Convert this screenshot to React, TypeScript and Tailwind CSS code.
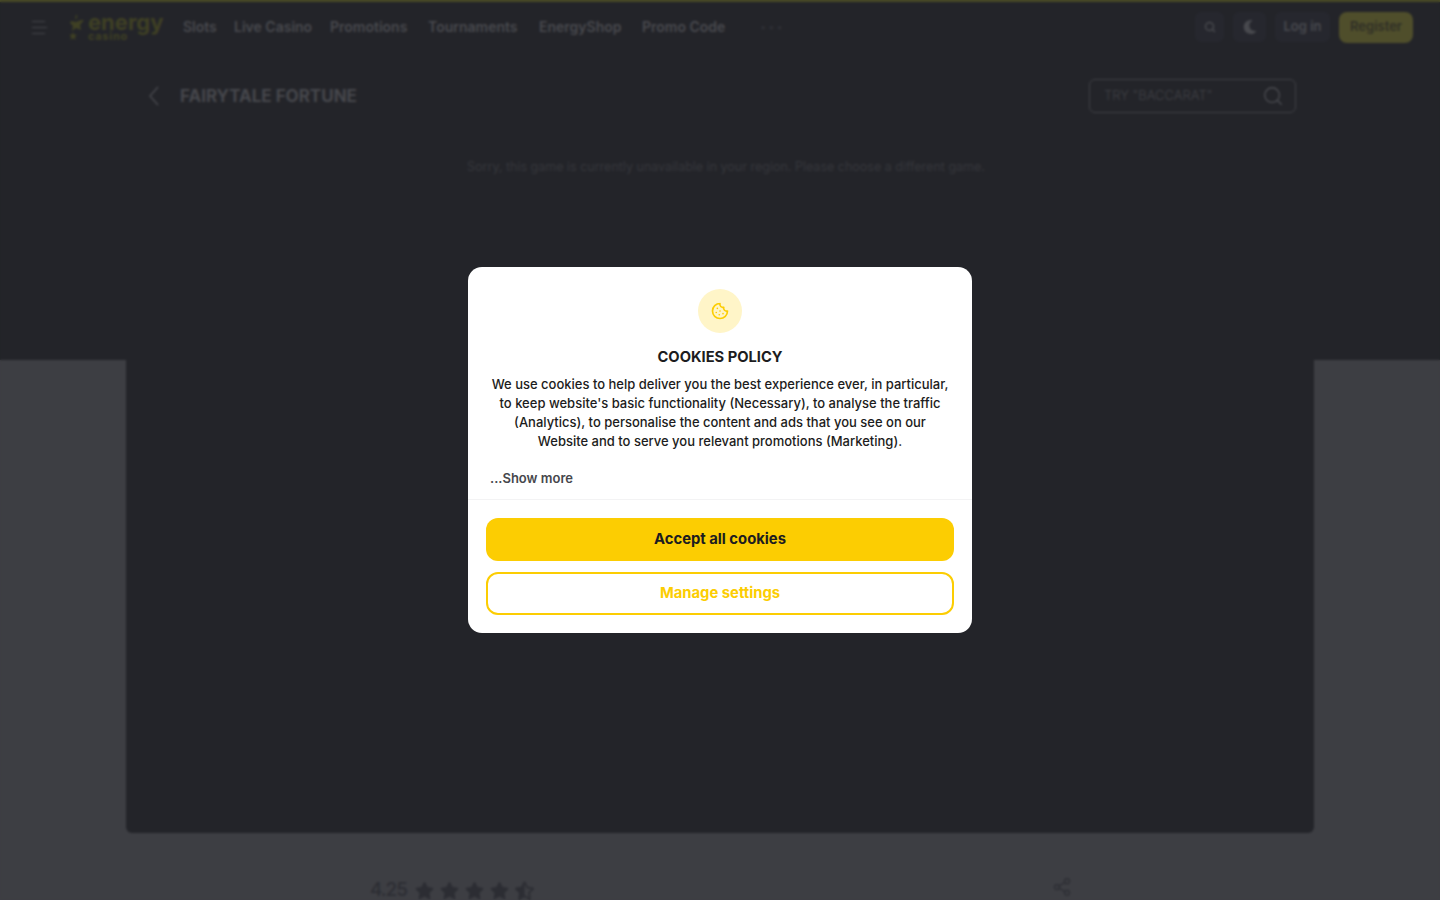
import { Cookie, Search, Share2 } from "lucide-react";
import { FaMoon, FaStar, FaStarHalfAlt } from "react-icons/fa";

const nav = [
  { label: "Slots", w: "w-[33px]" },
  { label: "Live Casino", w: "w-[78px]" },
  { label: "Promotions", w: "w-[80px]" },
  { label: "Tournaments", w: "w-[93px]" },
  { label: "EnergyShop", w: "w-[85px]" },
  { label: "Promo Code", w: "w-[86px]" },
];

function Logo() {
  return (
    <div className="flex items-center gap-[3px]">
      <svg width="17" height="26" viewBox="0 0 17 26" fill="#3f4024">
        <path d="M8 0l1.500 3L7 6z" />
        <path d="M3 7l5 1 5-2 3 0-4 5 1 5-5-2-4 3 1-5-3-3z" />
        <path d="M5 18l1 2.500 3 .3-2 2 .6 3-2.600-1.500-2.500 1.500.6-3-2-2 3-.3z" />
      </svg>
      <div className="flex w-[76px] flex-col text-[#3f4024]">
        <span className="text-[22px] leading-[18px] font-bold">energy</span>
        <span className="text-[11px] leading-[10px] font-bold tracking-[0.7px]">casino</span>
      </div>
    </div>
  );
}

function Header() {
  return (
    <header className="flex h-[54px] items-center border-t-2 border-[#484a26] pr-[27px] pb-[2px] pl-[32px]">
      <div className="flex w-[16px] flex-col gap-[5px]">
        <div className="h-px w-[13px] bg-[#44454a]" />
        <div className="h-px w-[15px] bg-[#44454a]" />
        <div className="h-px w-[13px] bg-[#44454a]" />
      </div>
      <div className="ml-[20px]">
        <Logo />
      </div>
      <nav className="ml-[19px] -mt-[2px] flex gap-[18px] text-[14px] font-semibold whitespace-nowrap text-[#48494e]">
        {nav.map((item) => (
          <a key={item.label} className={item.w}>{item.label}</a>
        ))}
      </nav>
      <span className="ml-[32px] text-[11px] tracking-[2px] text-[#2e2f35]">•••</span>
      <div className="ml-auto flex items-center gap-[9px]">
        <button className="flex h-[30px] w-[29px] items-center justify-center rounded-md bg-[#26272e] text-[#48494e]">
          <Search size={12} strokeWidth={3} />
        </button>
        <button className="flex h-[30px] w-[33px] items-center justify-center rounded-md bg-[#26272e] text-[#48494e]">
          <FaMoon size={14} />
        </button>
        <button className="flex h-[30px] w-[55px] items-center justify-center rounded-md bg-[#26272e] text-[13px] font-semibold text-[#48494e]">
          Log in
        </button>
        <button className="flex h-[31px] w-[74px] items-center justify-center rounded-lg bg-[#4f4e2b] text-[13px] font-semibold text-[#2f2f26]">
          Register
        </button>
      </div>
    </header>
  );
}

function Modal() {
  return (
    <div className="fixed inset-0 flex items-center justify-center backdrop-blur-[1px]">
      <div className="w-[504px] rounded-[14px] bg-white">
        <div className="flex flex-col items-center px-[18px] pt-[22px]">
          <div className="flex size-[44px] items-center justify-center rounded-full bg-[#fff5c8]">
            <Cookie size={18} strokeWidth={2.2} className="text-[#fccd02]" />
          </div>
          <h2 className="mt-[15px] text-[14.700px] leading-[19px] font-bold text-[#1c1c20]">COOKIES POLICY</h2>
          <p className="mt-[8px] text-center text-[13px] leading-[19px] font-medium whitespace-nowrap text-[#1c1c20]">
            We use cookies to help deliver you the best experience ever, in particular,
            <br />
            to keep website's basic functionality (Necessary), to analyse the traffic
            <br />
            (Analytics), to personalise the content and ads that you see on our
            <br />
            Website and to serve you relevant promotions (Marketing).
          </p>
          <div className="mt-[18px] w-full pl-[4px] text-[13px] leading-[19px] font-semibold text-[#46474c]">...Show more</div>
        </div>
        <div className="mt-[11px] border-t border-[#f3f3f4] p-[18px]">
          <button className="h-[43px] w-full rounded-xl bg-[#fccd02] text-[14.800px] font-bold text-[#1c1c20]">Accept all cookies</button>
          <button className="mt-[11px] h-[43px] w-full rounded-xl border-2 border-[#fccd02] bg-white text-[14.800px] font-bold text-[#fccd02]">Manage settings</button>
        </div>
      </div>
    </div>
  );
}

export default function App() {
  return (
    <div className="h-[900px] overflow-hidden bg-[#3d3e43] font-['Inter',sans-serif]">
      <section className="h-[360px] bg-[#232429]">
        <Header />
        <div className="mx-[144px] mt-[25px] flex items-center justify-between">
          <div className="flex items-center gap-[21px]">
            <svg width="11" height="20" viewBox="0 0 11 20" fill="none" stroke="#46474c" strokeWidth="1.5" className="ml-[4px]">
              <path d="M10 1L2 10l8 9" />
            </svg>
            <h1 className="pt-[2px] text-[17px] font-bold text-[#46474c]">FAIRYTALE FORTUNE</h1>
          </div>
          <div className="flex h-[34px] w-[207px] items-center justify-between rounded-md border border-[#3f4045] pr-[11px] pl-[14px]">
            <span className="text-[13px] font-light text-[#404146]">TRY "BACCARAT"</span>
            <Search size={22} strokeWidth={1.5} className="text-[#4a4b50]" />
          </div>
        </div>
        <p className="mt-[45px] ml-[12px] text-center text-[12.500px] text-[#36373c]">
          Sorry, this game is currently unavailable in your region. Please choose a different game.
        </p>
      </section>
      <div className="mx-[126px] h-[473px] rounded-b-md bg-[#232429]" />
      <div className="mx-[352px] mt-[47px] flex items-center justify-between pr-[16px] pl-[18px]">
        <div className="flex items-center gap-[8px] text-[#2c2d33]">
          <span className="text-[19px] leading-[20px] font-medium tracking-[-1px]">4.25</span>
          <div className="flex gap-[6px]">
            <FaStar size={19} />
            <FaStar size={19} />
            <FaStar size={19} />
            <FaStar size={19} />
            <FaStarHalfAlt size={19} />
          </div>
        </div>
        <Share2 size={20} strokeWidth={1.5} className="-mt-[6px] text-[#2c2d33]" />
      </div>
      <Modal />
    </div>
  );
}
